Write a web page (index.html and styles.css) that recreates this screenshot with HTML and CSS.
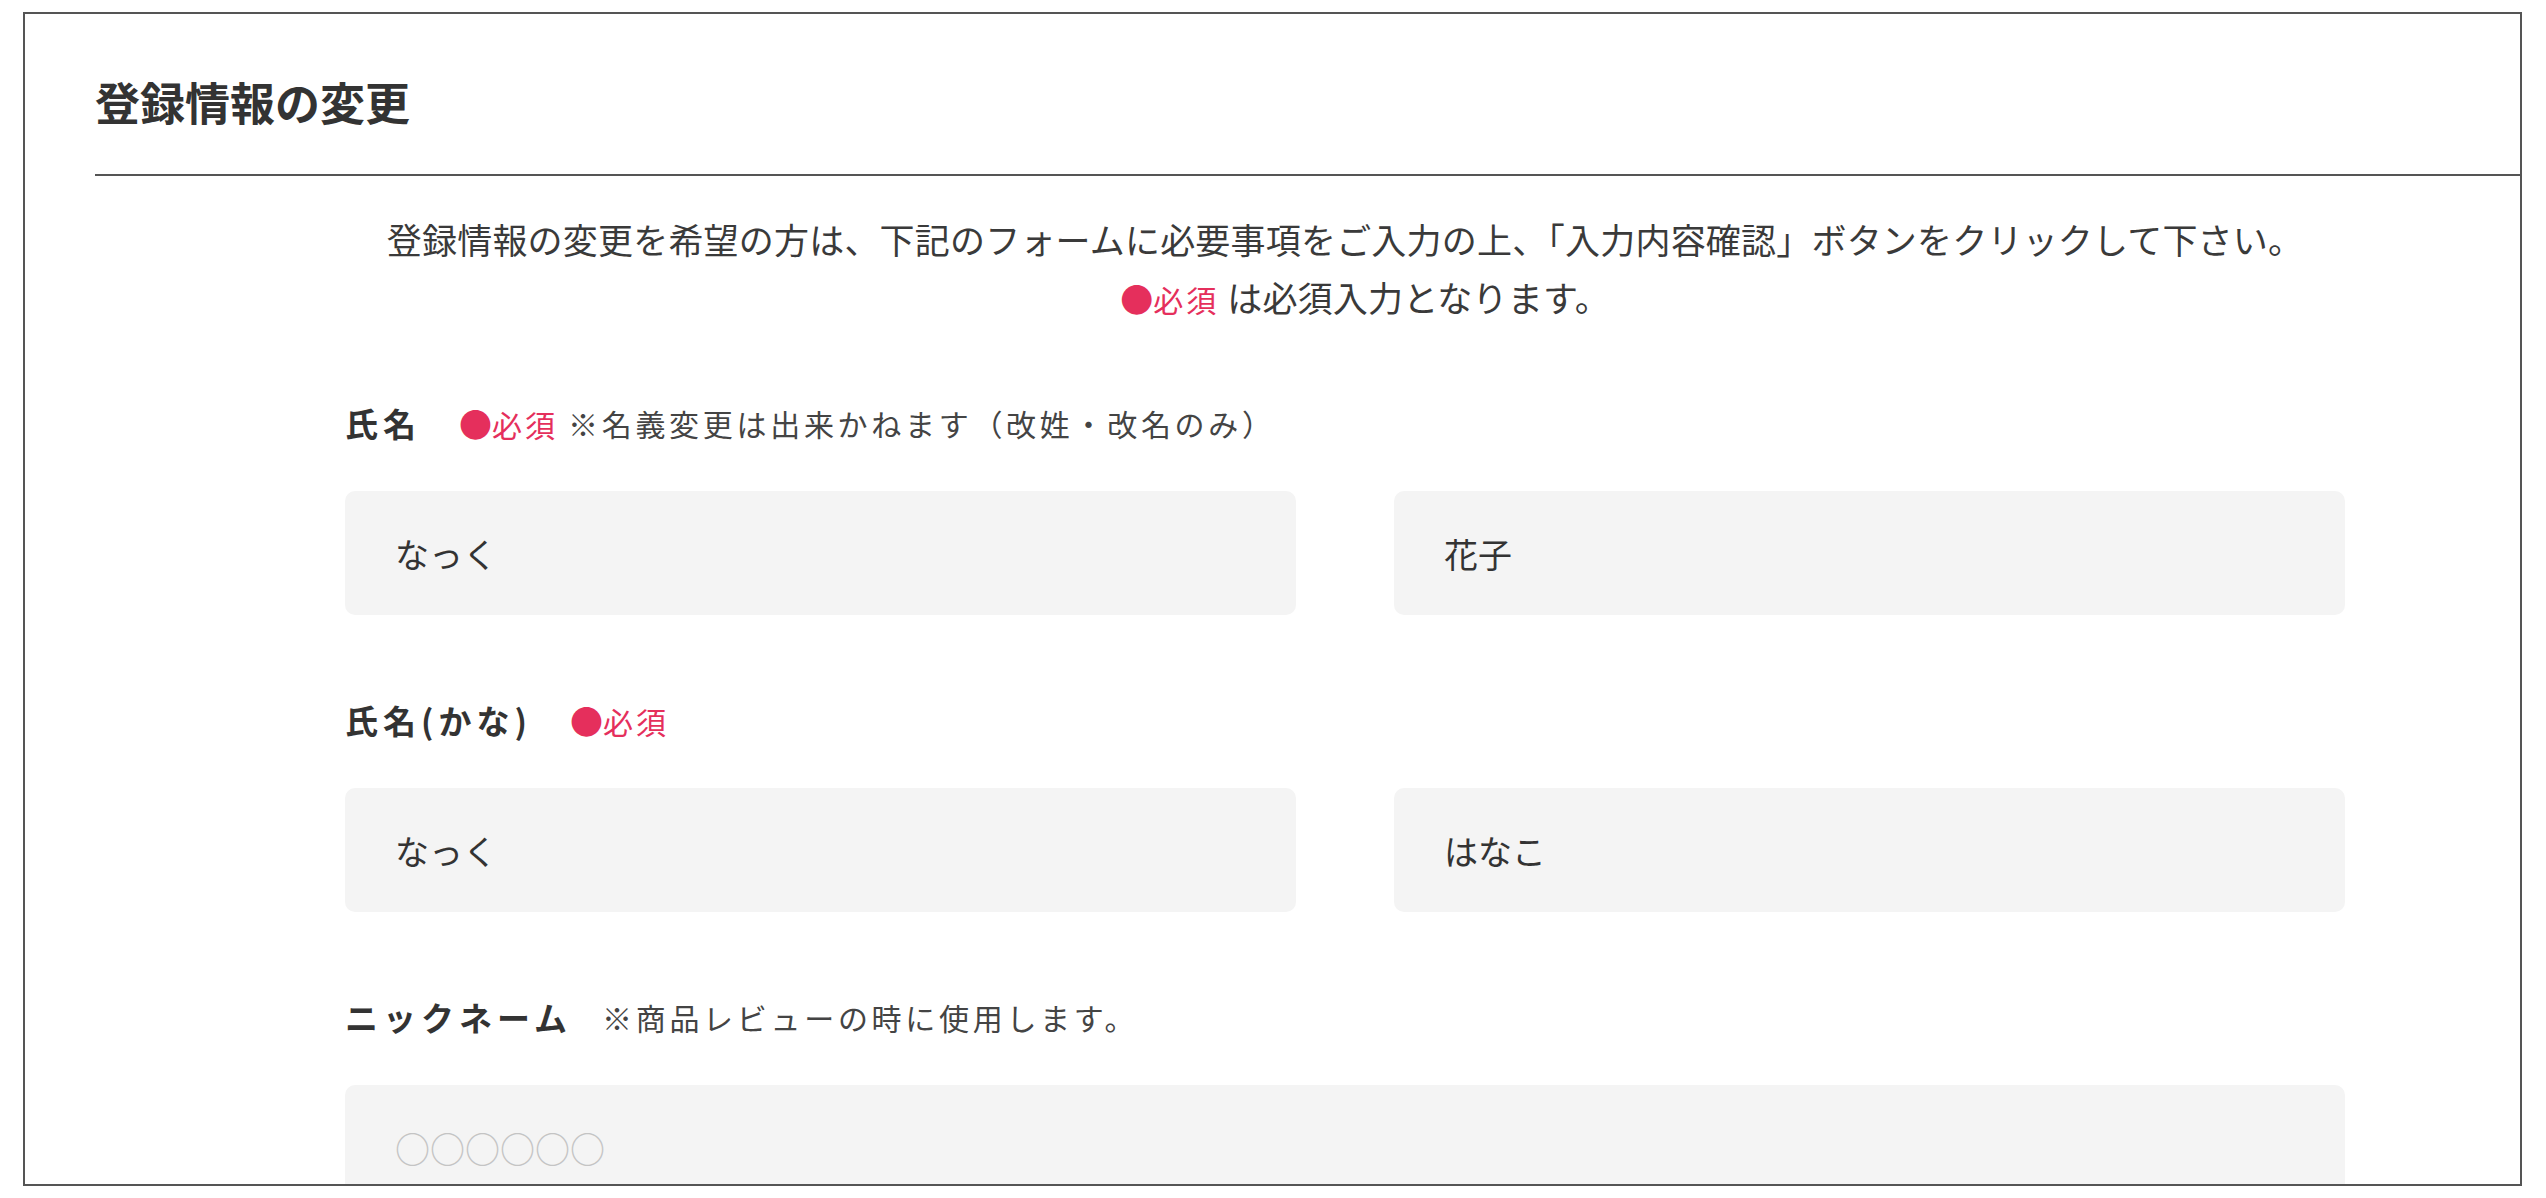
FILE: index.html
```html
<!DOCTYPE html>
<html lang="ja">
<head>
<meta charset="utf-8">
<title>登録情報の変更</title>
<link rel="stylesheet" href="styles.css">
</head>
<body>
<div class="frame">
  <h1 class="page-title">登録情報の変更</h1>
  <div class="form">
    <div class="intro">
      <p class="intro-line">登録情報の変更を希望の方は、下記のフォームに必要事項をご入力の上、「入力内容確認」ボタンをクリックして下さい。</p>
      <p class="intro-line intro-line--req"><span class="req"><span class="dot">●</span>必須</span> は必須入力となります。</p>
    </div>

    <div class="field">
      <div class="label-row">
        <span class="label">氏名</span>
        <span class="req req--label"><span class="dot">●</span>必須</span>
        <span class="note">※名義変更は出来かねます（改姓・改名のみ）</span>
      </div>
      <div class="inputs inputs--two">
        <input class="text-input" type="text" value="なっく">
        <input class="text-input" type="text" value="花子">
      </div>
    </div>

    <div class="field">
      <div class="label-row">
        <span class="label">氏名(かな)</span>
        <span class="req req--label"><span class="dot">●</span>必須</span>
      </div>
      <div class="inputs inputs--two">
        <input class="text-input" type="text" value="なっく">
        <input class="text-input" type="text" value="はなこ">
      </div>
    </div>

    <div class="field">
      <div class="label-row">
        <span class="label">ニックネーム</span>
        <span class="note note--after-label">※商品レビューの時に使用します。</span>
      </div>
      <div class="inputs">
        <input class="text-input text-input--placeholder" type="text" placeholder="○○○○○○">
      </div>
    </div>
  </div>
</div>
</body>
</html>
```

FILE: styles.css
```css
html, body {
  margin: 0;
  padding: 0;
  background: #ffffff;
}

body {
  font-family: "Noto Sans CJK JP", "Noto Sans", sans-serif;
  color: #333333;
}

.frame {
  box-sizing: border-box;
  margin: 12px 0 0 23px;
  width: 2499px;
  height: 1174px;
  border: 2px solid #555555;
  overflow: hidden;
}

.page-title {
  margin: 0 0 0 70px;
  padding: 58px 0 42px;
  font-size: 45px;
  line-height: 60px;
  font-weight: 700;
  color: #333333;
  border-bottom: 2px solid #555555;
}

.form {
  margin-left: 320px;
  width: 2000px;
}

.intro {
  margin-top: 34px;
  text-align: center;
}

.intro-line {
  margin: 0;
  font-size: 35px;
  line-height: 58px;
  letter-spacing: 0.2px;
  color: #3a3a3a;
}

.intro-line--req {
  padding-left: 40px;
}

.req {
  color: #e52f5c;
  font-size: 30px;
  letter-spacing: 3px;
}

.dot {
  font-size: 33px;
  letter-spacing: 0;
}

.field {
  margin-top: 80px;
}

.intro + .field {
  margin-top: 70px;
}

.label-row {
  display: flex;
  align-items: center;
  height: 50px;
}

.label {
  font-size: 33px;
  line-height: 50px;
  font-weight: 700;
  letter-spacing: 5px;
  margin-right: 30px;
}

.req--label {
  line-height: 50px;
  margin-left: 8px;
  margin-right: 10px;
}

.note {
  font-size: 30px;
  line-height: 50px;
  letter-spacing: 3.7px;
  color: #444444;
}

.inputs {
  margin-top: 43px;
}

.inputs--two {
  display: grid;
  grid-template-columns: 1fr 1fr;
  column-gap: 98px;
}

.text-input {
  display: block;
  box-sizing: border-box;
  width: 100%;
  height: 124px;
  margin: 0;
  padding: 0 50px;
  border: none;
  border-radius: 10px;
  background: #f4f4f4;
  font-family: "Noto Sans CJK JP", "Noto Sans", sans-serif;
  font-size: 34px;
  color: #333333;
  outline: none;
}

.text-input--placeholder {
  font-size: 35px;
}

.text-input::placeholder {
  color: #c4c4c4;
}
```
